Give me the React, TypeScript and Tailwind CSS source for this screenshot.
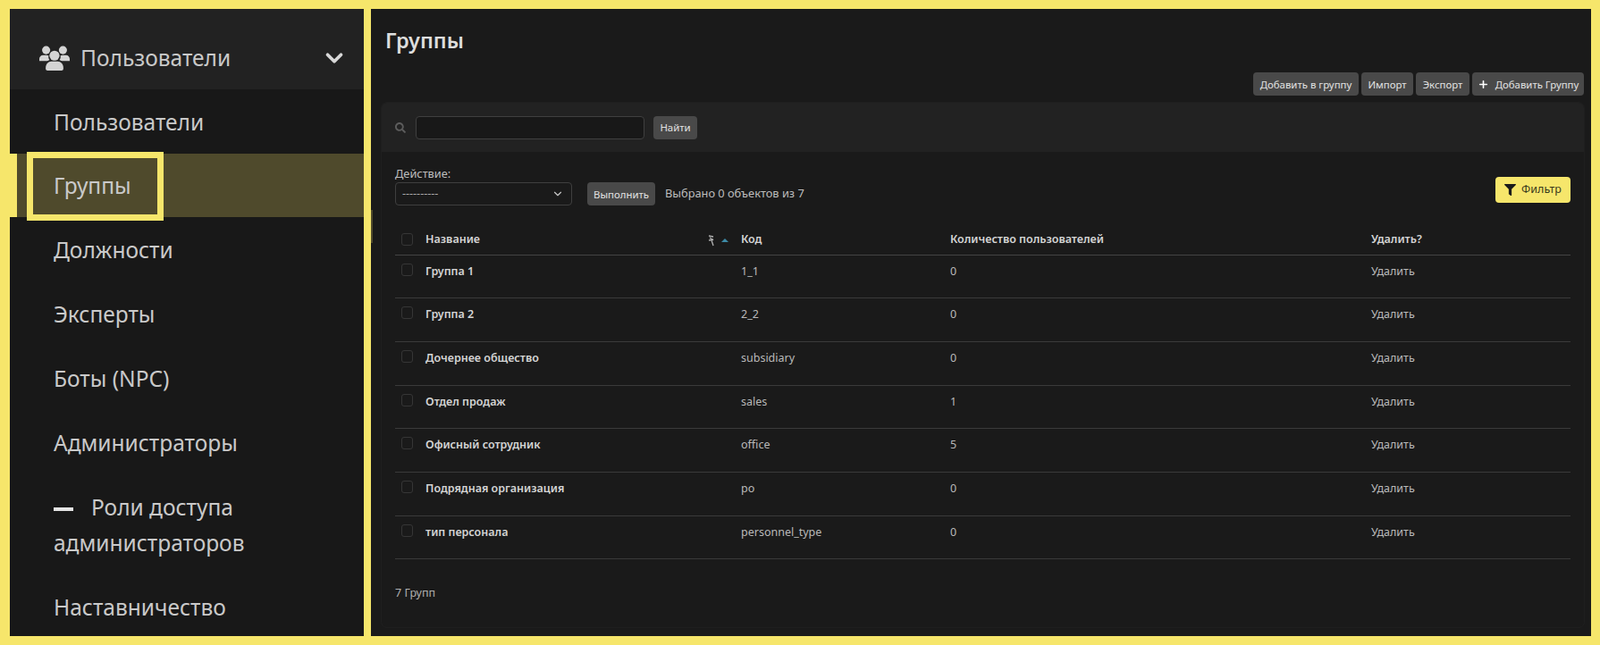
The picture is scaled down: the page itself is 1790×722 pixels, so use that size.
import { ChevronDown, Plus } from "lucide-react";
import { FaFilter, FaSearch } from "react-icons/fa";

const rows: [string, string, string][] = [
  ["Группа 1", "1_1", "0"],
  ["Группа 2", "2_2", "0"],
  ["Дочернее общество", "subsidiary", "0"],
  ["Отдел продаж", "sales", "1"],
  ["Офисный сотрудник", "office", "5"],
  ["Подрядная организация", "po", "0"],
  ["тип персонала", "personnel_type", "0"],
];

function Btn({ children, className = "" }: { children: React.ReactNode; className?: string }) {
  return (
    <button className={"flex h-[26px] items-center justify-center rounded-[4px] bg-[#494949] pt-[1px] text-[11.4px] text-[#e2e2e2] " + className}>
      {children}
    </button>
  );
}

function Box() {
  return <span className="block h-[14px] w-[13px] rounded-[3px] border border-[#363636]" />;
}

function Item({ label }: { label: string }) {
  return <div className="flex h-[72px] items-center pl-[49px] pt-[2px]">{label}</div>;
}

function UsersIcon() {
  return (
    <svg width="34" height="28" viewBox="0 0 33.5 27.5" fill="currentColor" className="text-[#d4d4d4]">
      <circle cx="7.5" cy="5" r="4.5" />
      <circle cx="26" cy="5" r="4.5" />
      <circle cx="16.7" cy="11" r="5.5" />
      <path d="M0 17v-2.5c0-2.2 1.8-4 4-4h4c.8 0 1.5.2 2.2.6-.3 2-.1 3.4 1.2 4.9-1.5.5-2.6 1-3.4 1z" />
      <path d="M33.5 17v-2.5c0-2.2-1.8-4-4-4h-4c-.8 0-1.5.2-2.2.6.3 2 .1 3.4-1.2 4.9 1.5.5 2.6 1 3.4 1z" />
      <path d="M7 24.5c0-4 3-7 6-7h7.5c3 0 6 3 6 7v1c0 1-1 2-2 2H9c-1 0-2-1-2-2z" />
    </svg>
  );
}

export default function App() {
  return (
    <div className="flex h-[722px] w-[1790px] gap-[8px] overflow-hidden bg-[#f6e66b] pb-[10px] pl-[11px] pr-[10px] pt-[10px] font-['Inter','Liberation_Sans',sans-serif]">
      <aside className="w-[396px] shrink-0 overflow-hidden bg-[#181818] text-[24.5px] text-[#c9c9c9]">
        <div className="flex h-[90px] items-center bg-[#222222] pl-[33px] pr-[18px] pt-[20px]">
          <UsersIcon />
          <span className="ml-[12px]">Пользователи</span>
          <ChevronDown className="ml-auto h-[30px] w-[30px] text-[#d8d8d8]" strokeWidth={3} />
        </div>
        <Item label="Пользователи" />
        <div className="relative flex h-[71px] items-center border-l-[8px] border-[#f6e66b] bg-[#4f4a2c] pl-[41px] pt-[2px]">
          Группы
          <span className="absolute left-[11px] top-[-2px] h-[77px] w-[153px] border-[7px] border-[#f6e66b]" />
        </div>
        <Item label="Должности" />
        <Item label="Эксперты" />
        <Item label="Боты (NPC)" />
        <Item label="Администраторы" />
        <div className="pb-[15px] pl-[49px] pt-[17px] leading-[40px]">
          <span className="mr-[20px] inline-block h-[4px] w-[22px] bg-[#e4e4e4] align-middle" />
          Роли доступа
          <br />
          администраторов
        </div>
        <Item label="Наставничество" />
      </aside>

      <main className="relative flex-1 bg-[#1a1a1a] pl-[12px] pr-[8px]">
        <span className="absolute left-0 top-[225px] h-[37px] w-[2px] bg-[#4f4a2c]" />
        <h1 className="pl-[4px] pt-[19px] text-[23.5px] font-semibold leading-[32px] text-[#dddddd]">Группы</h1>
        <div className="mt-[20px] flex justify-end gap-[3px]">
          <Btn className="w-[118px]">Добавить в группу</Btn>
          <Btn className="w-[58px]">Импорт</Btn>
          <Btn className="w-[60px]">Экспорт</Btn>
          <Btn className="w-[125px] gap-[7px]">
            <Plus className="h-[13px] w-[13px] text-white" strokeWidth={3} />
            Добавить Группу
          </Btn>
        </div>

        <section className="mt-[8px] h-[587px] rounded-[6px] shadow-[0_0_0_1px_#1f1f1f]">
          <div className="flex h-[55px] items-center rounded-t-[6px] bg-[#222222] pl-[15px]">
            <FaSearch className="h-[12px] w-[12px] text-[#5c5c5c]" />
            <div className="ml-[11px] h-[26px] w-[256px] rounded-[4px] border border-[#3f3f3f] bg-[#181818]" />
            <Btn className="ml-[10px] w-[49px]">Найти</Btn>
          </div>

          <div className="px-[15px]">
            <div className="flex h-[60px] items-end">
              <div>
                <div className="text-[12.8px] leading-[16px] text-[#bdbdbd]">Действие:</div>
                <div className="mt-[2px] flex h-[26px] w-[198px] items-center justify-between rounded-[4px] border border-[#3f3f3f] pl-[7px] pr-[8px] text-[12.5px] text-[#a8a8a8]">
                  ----------
                  <ChevronDown className="h-[14px] w-[14px] text-[#c8c8c8]" strokeWidth={2} />
                </div>
              </div>
              <Btn className="ml-[17px] w-[76px]">Выполнить</Btn>
              <span className="mb-[4px] ml-[11px] text-[12.8px] text-[#bdbdbd]">Выбрано 0 объектов из 7</span>
              <button className="mb-[3px] ml-auto flex h-[29px] w-[84px] items-center justify-center gap-[6px] rounded-[4px] bg-[#f6e66b] text-[12.5px] text-[#3a3a1c]">
                <FaFilter className="h-[13px] w-[13px] text-[#1a1a1a]" />
                Фильтр
              </button>
            </div>

            <table className="mt-[21px] w-full table-fixed border-collapse text-left text-[12.5px]">
              <colgroup>
                <col className="w-[34px]" />
                <col className="w-[353px]" />
                <col className="w-[234px]" />
                <col className="w-[471px]" />
                <col />
              </colgroup>
              <thead>
                <tr className="h-[34px] border-b border-[#444444] text-[#d4d4d4]">
                  <th className="pl-[7px] font-bold"><Box /></th>
                  <th className="pt-[2px] font-semibold">
                    <div className="flex items-center justify-between pr-[14px]">
                      Название
                      <span className="flex items-center gap-[7px]">
                        <svg width="8" height="14" viewBox="0 0 8 14" className="text-[#b0b0b0]">
                          <path d="M1 2l5 1M2 4l4 3M1 7l5-1M4 7l2 6" stroke="currentColor" strokeWidth="1.3" fill="none" />
                        </svg>
                        <span className="h-0 w-0 border-x-[4px] border-b-[4px] border-x-transparent border-b-[#3d8aa6]" />
                      </span>
                    </div>
                  </th>
                  <th className="pt-[2px] font-semibold">Код</th>
                  <th className="pt-[2px] font-semibold">Количество пользователей</th>
                  <th className="pt-[2px] font-semibold">Удалить?</th>
                </tr>
              </thead>
              <tbody>
                {rows.map(([name, code, count]) => (
                  <tr key={name} className="h-[48.7px] border-b border-[#3a3a3a] align-top text-[#b9b9b9]">
                    <td className="pl-[7px] pt-[9px]"><Box /></td>
                    <td className="pt-[9px] font-semibold text-[#d4d4d4]">{name}</td>
                    <td className="pt-[9px]">{code}</td>
                    <td className="pt-[9px]">{count}</td>
                    <td className="pt-[9px]">Удалить</td>
                  </tr>
                ))}
              </tbody>
            </table>
            <div className="mt-[29px] text-[12.5px] text-[#b0b0b0]">7 Групп</div>
          </div>
        </section>
      </main>
    </div>
  );
}
